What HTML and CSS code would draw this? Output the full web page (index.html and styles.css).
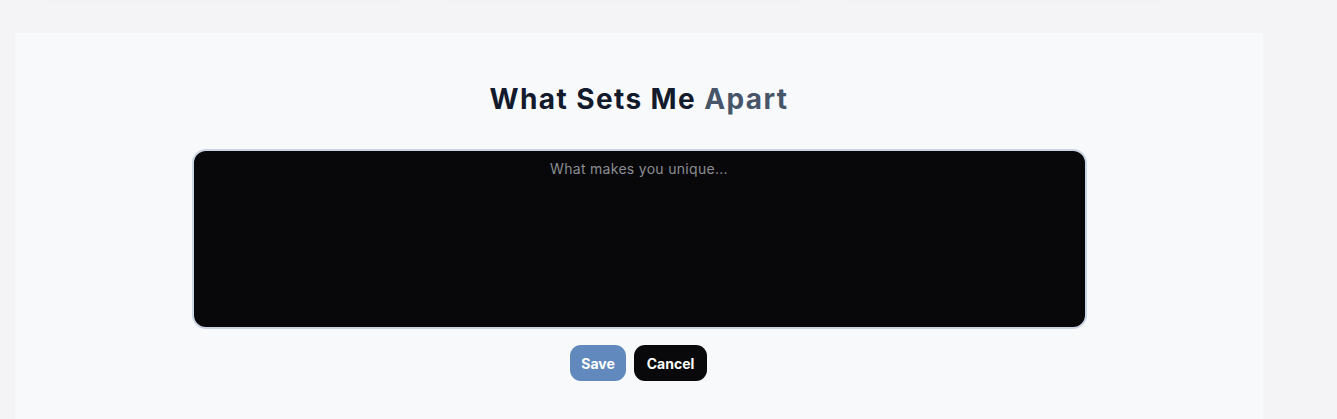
FILE: index.html
```html
<!DOCTYPE html>
<html>
<head>
<meta charset="utf-8">
<link rel="stylesheet" href="styles.css">
</head>
<body>
<div class="top-cards">
  <div class="ghost ghost-1"></div>
  <div class="ghost ghost-2"></div>
  <div class="ghost ghost-3"></div>
</div>
<section class="panel">
  <h2 class="title">What Sets Me <span class="accent">Apart</span></h2>
  <textarea class="editor" placeholder="What makes you unique..."></textarea>
  <div class="actions">
    <button class="btn btn-save">Save</button>
    <button class="btn btn-cancel">Cancel</button>
  </div>
</section>
</body>
</html>
```
FILE: styles.css
```css
* { box-sizing: border-box; }
html, body { margin: 0; }
body {
  background: #f4f4f6;
  font-family: "Inter", "Liberation Sans", sans-serif;
  height: 419px;
  overflow: hidden;
}
.top-cards {
  display: flex;
  height: 0;
  padding-left: 43px;
  gap: 42px;
}
.ghost {
  height: 8px;
  margin-top: -8px;
  width: 358px;
  background: #f2f2f5;
  box-shadow: 0 1px 4px rgba(0,0,0,0.015);
  border-radius: 6px;
}
.ghost-3 { width: 324px; }
.panel {
  margin: 33px 0 0 15px;
  width: 1248px;
  height: 386px;
  background: #f8f9fb;
  padding-top: 48px;
  display: flex;
  flex-direction: column;
  align-items: center;
}
.title {
  margin: 0;
  font-size: 28px;
  line-height: 36px;
  font-weight: 700;
  color: #131a2b;
  letter-spacing: 1.4px;
}
.accent { color: #475569; }
.editor {
  margin-top: 32px;
  width: 895px;
  height: 180px;
  background: #08080b;
  border: 2px solid #cbd5e1;
  border-radius: 14px;
  padding: 8px 16px;
  font-family: inherit;
  font-size: 14px;
  line-height: 20px;
  letter-spacing: 0.3px;
  color: #e5e7eb;
  text-align: center;
  resize: none;
  outline: none;
  display: block;
}
.editor::placeholder { color: #8b8d93; }
.actions {
  margin-top: 16px;
  display: flex;
  gap: 8px;
  padding-right: 1px;
}
.btn {
  height: 36px;
  padding: 0;
  border: none;
  border-radius: 11px;
  font-family: inherit;
  font-size: 14px;
  font-weight: 700;
  color: #ffffff;
  text-align: center;
}
.btn-save { background: #6289bd; width: 56px; }
.btn-cancel { background: #09090b; width: 73px; }
```
